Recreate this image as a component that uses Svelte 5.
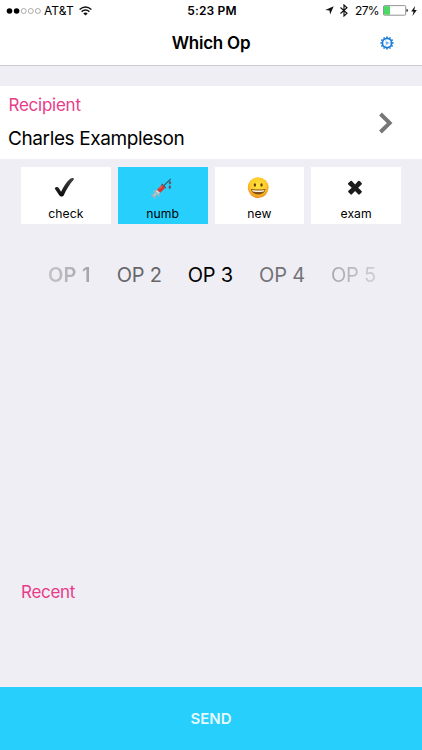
<script>
  const actions = ['check', 'numb', 'new', 'exam'];
  const ops = ['OP 1', 'OP 2', 'OP 3', 'OP 4', 'OP 5'];
  const teeth = Array.from({ length: 12 }, (_, i) => i * 30);
  let selected = $state('numb');
</script>

<div class="screen">
  <header>
    <div class="status">
      <div class="left">
        <svg class="dots" width="35" height="8" viewBox="0 0 35 8">
          {#each [0, 1, 2, 3, 4] as n}
            <circle cx={3.5 + n * 7.1} cy="4" r={n < 2 ? 2.8 : 2.5} fill={n < 2 ? '#000' : 'none'} stroke={n < 2 ? 'none' : '#777'} stroke-width="0.6" />
          {/each}
        </svg>
        <span class="carrier">AT&amp;T</span>
        <svg class="wifi" width="13" height="10" viewBox="0 0 13 10" fill="none" stroke="#111" stroke-width="1.5">
          <path d="M.6 3.5Q6.5-1.5 12.4 3.5M2.6 5.7Q6.5 2.5 10.4 5.7" />
          <path d="M4.3 7.4Q6.5 5.7 8.7 7.4L6.5 9.6Z" fill="#111" stroke="none" />
        </svg>
      </div>
      <span class="time">5:23 PM</span>
      <div class="right">
        <svg width="9" height="9" viewBox="0 0 9 9"><path d="M8.7.3 5.1 8.5 4.5 4.6.3 4.1Z" fill="#111" /></svg>
        <svg class="bt" width="8" height="13" viewBox="0 0 8 13" fill="none" stroke="#111" stroke-width="1.15"><path d="M.5 3.5 7 9.2 4 12V1l3 2.8L.5 9.5" /></svg>
        <span class="percent">27%</span>
        <svg class="battery" width="25" height="11" viewBox="0 0 25 11">
          <rect x=".5" y=".6" width="22.2" height="9.6" rx="1" fill="#fff" stroke="#777" stroke-width=".8" />
          <path d="M1 1.1h6v8.6H1z" fill="#4cd864" />
          <path d="M23.5 3.7q1.4.3 1.4 1.7t-1.4 1.7z" fill="#222" />
        </svg>
        <svg class="bolt" width="6" height="10" viewBox="0 0 6 10"><path d="M4.1 0 .2 5.4H2.6L1.5 10 5.8 4.1H3.3Z" fill="#111" /></svg>
      </div>
    </div>
    <nav>
      <h1>Which Op</h1>
      <button class="settings" aria-label="Settings">
        <svg width="14" height="14" viewBox="-7 -7 14 14" fill="none" stroke="#187bdd">
          <circle r="4.6" stroke-width="1.7" />
          <circle r="1" stroke-width=".7" />
          <path d="M-.6-1-2.1-3.8M-.6 1-2.1 3.8M1 0H4.3" stroke-width=".3" />
          {#each teeth as angle}
            <path d="M0-5V-6.6" stroke-width="1.6" transform="rotate({angle})" />
          {/each}
        </svg>
      </button>
    </nav>
  </header>

  <section class="recipient">
    <div>
      <div class="pink label">Recipient</div>
      <div class="name">Charles Exampleson</div>
    </div>
    <svg width="16" height="24" viewBox="0 0 16 24" fill="none"><path d="M2.5 3 11.7 12 2.5 21" stroke="#777" stroke-width="3.9" /></svg>
  </section>

  <section class="tiles">
    {#each actions as action}
      <button class="tile" class:selected={selected === action} onclick={() => (selected = action)}>
        {#if action === 'check'}
          <svg width="24" height="24" viewBox="1.5 .4 24 24">
            <defs><linearGradient id="ink" x1="0" y1="0" x2="0" y2="1"><stop stop-color="#444" /><stop offset="1" stop-color="#080808" /></linearGradient></defs>
            <path d="M2.2 13C2.6 11 5.4 10.8 6.3 12.4L8.6 16.2C11 11 14 6.2 17.7 3.1C19.4 1.7 22.2 2.4 21.3 3.9C16.8 9 13.8 14 11.4 19.4C10.5 21.3 7.9 21.4 6.9 19.8Z" fill="url(#ink)" />
          </svg>
        {:else if action === 'numb'}
          <svg width="24" height="24" viewBox=".8 -1.3 26 26">
            <path d="M14.5 9.5 22.2 1.8" stroke="#35565e" stroke-width="1.2" />
            <path d="M3.5 20.5 8 16" stroke="#b8c6cc" stroke-width="2.8" />
            <path d="M2 19 5.1 22M4.4 15.2 9.4 20" stroke="#a3b3bc" stroke-width="2" stroke-linecap="round" />
            <path d="M5.6 15.3 12.7 8.2 16.2 11.5 9.1 18.6Z" fill="#cad3d8" />
            <path d="M7.6 13.5 12.8 8.3 16 11.5 10.8 16.7Z" fill="#da3431" stroke="#9d4c50" stroke-width=".7" />
            <path d="M10 12.6 13.4 9.2" stroke="#ff817b" />
            <path d="M12.3 7.2 17 11.8" stroke="#694b50" stroke-width="1.2" />
            <path d="M21.4 4Q19.6 6.6 20.6 7.2T22.3 6.9Q22.7 6 21.4 4M21.2 8.7Q19.4 11.3 20.4 12T22.1 11.6Q22.6 10.7 21.2 8.7" fill="#8c3138" stroke="#48646f" stroke-width=".5" />
          </svg>
        {:else if action === 'new'}
          <svg width="24" height="24" viewBox="0 0 24 24">
            <defs><radialGradient id="face" cx=".5" cy=".4" r=".6"><stop stop-color="#ffe43b" /><stop offset=".65" stop-color="#ffca2c" /><stop offset="1" stop-color="#eb8b16" /></radialGradient></defs>
            <circle cx="11.2" cy="11.6" r="10.4" fill="url(#face)" />
            <ellipse cx="7.9" cy="9" rx="1.2" ry="1.7" fill="#68400e" />
            <ellipse cx="14.5" cy="9" rx="1.2" ry="1.7" fill="#68400e" />
            <path d="M3.9 13Q11.2 14.2 18.5 13C17.5 20.4 4.9 20.4 3.9 13Z" fill="#855119" />
            <path d="M4.9 13.9Q11.2 14.9 17.5 13.9L16.7 15.6Q11.2 16.6 5.7 15.6Z" fill="#fff9df" />
          </svg>
        {:else}
          <svg width="24" height="24" viewBox="0 -.7 26 26"><path d="M4.2 7.5 7 4.7Q7.8 4 8.6 4.8L12 8.4 15.3 4.8Q16.1 4 16.9 4.8L19.1 7Q19.8 7.8 19 8.6L15.4 12.1 19 15.6Q19.8 16.4 19 17.2L17 19.2Q16.2 20 15.4 19.2L12 15.6 8.6 19.2Q7.8 20 7 19.2L4.8 17Q4 16.2 4.8 15.4L8.4 12.1 4.6 8.5Q4.2 8.1 4.2 7.5Z" fill="#1b1b1b" /></svg>
        {/if}
        <span>{action}</span>
      </button>
    {/each}
  </section>

  <section class="ops">
    {#each ops as op, i}
      <span class="op op{i + 1}">{op}</span>
    {/each}
  </section>

  <section class="recent pink">Recent</section>
  <button class="send">SEND</button>
</div>

<style>
  :global(body) { margin: 0; }
  * { box-sizing: border-box; }
  button { border: 0; padding: 0; font-family: inherit; color: inherit; }
  svg { display: block; flex-shrink: 0; }
  .screen { width: 422px; height: 750px; display: flex; flex-direction: column; background: #efeef4; font-family: Inter, "Liberation Sans", sans-serif; color: #000; overflow: hidden; }
  header { height: 66px; flex-shrink: 0; background: #fff; border-bottom: 1px solid #cbcad0; }
  .status { height: 21px; padding: 0 5px 0 6px; display: grid; grid-template-columns: 1fr auto 1fr; align-items: center; font-size: 12px; line-height: 20px; }
  .left, .right { display: flex; align-items: center; }
  .right { justify-content: flex-end; }
  .carrier { margin-left: 3px; letter-spacing: .1px; }
  .wifi { margin-left: 5px; }
  .time { font-weight: 600; letter-spacing: .15px; margin-left: 1px; }
  .bt { margin-left: 6px; }
  .percent { margin-left: 7px; letter-spacing: -.65px; }
  .battery { margin-left: 4px; }
  .bolt { margin-left: 3px; }
  nav { height: 44px; display: grid; grid-template-columns: 1fr auto 1fr; align-items: center; }
  h1 { grid-column: 2; margin: 0; font-size: 17px; font-weight: 600; letter-spacing: -.25px; line-height: 24px; }
  .settings { justify-self: end; margin-right: 28px; background: none; }
  .recipient { margin-top: 20px; height: 73px; flex-shrink: 0; background: #fff; display: flex; justify-content: space-between; align-items: center; padding: 0 28px 0 8px; }
  .pink { color: #e83c89; }
  .label { font-size: 17px; line-height: 24px; letter-spacing: -.25px; padding-left: .5px; }
  .name { margin-top: 9px; font-size: 19px; line-height: 26px; letter-spacing: -.39px; }
  .tiles { margin: 8px 21px 0; display: grid; grid-template-columns: repeat(4, 1fr); gap: 7px; }
  .tile { height: 57px; background: #fff; display: flex; flex-direction: column; align-items: center; font-size: 12.2px; line-height: 16px; letter-spacing: .05px; padding-top: 9px; }
  .tile span { margin-top: 6px; }
  .selected { background: #26cffc; }
  .ops { margin: 37px 46px 0 48px; display: flex; justify-content: space-between; font-size: 20px; line-height: 28px; }
  .op { white-space: nowrap; letter-spacing: -.2px; }
  .op1 { font-weight: 600; letter-spacing: .2px; color: transparent; background: linear-gradient(90deg, #c3c3c8, #a3a3a8); background-clip: text; }
  .op2 { color: #67676b; }
  .op4 { color: #737377; }
  .op5 { color: transparent; background: linear-gradient(90deg, #a6a6ab, #cfced4); background-clip: text; }
  .recent { margin: 291px 21px 0; font-size: 17px; line-height: 24px; letter-spacing: -.3px; }
  .send { margin-top: auto; height: 63px; flex-shrink: 0; background: #26cffc; color: #e4faff; font-weight: 600; font-size: 15px; }
</style>
